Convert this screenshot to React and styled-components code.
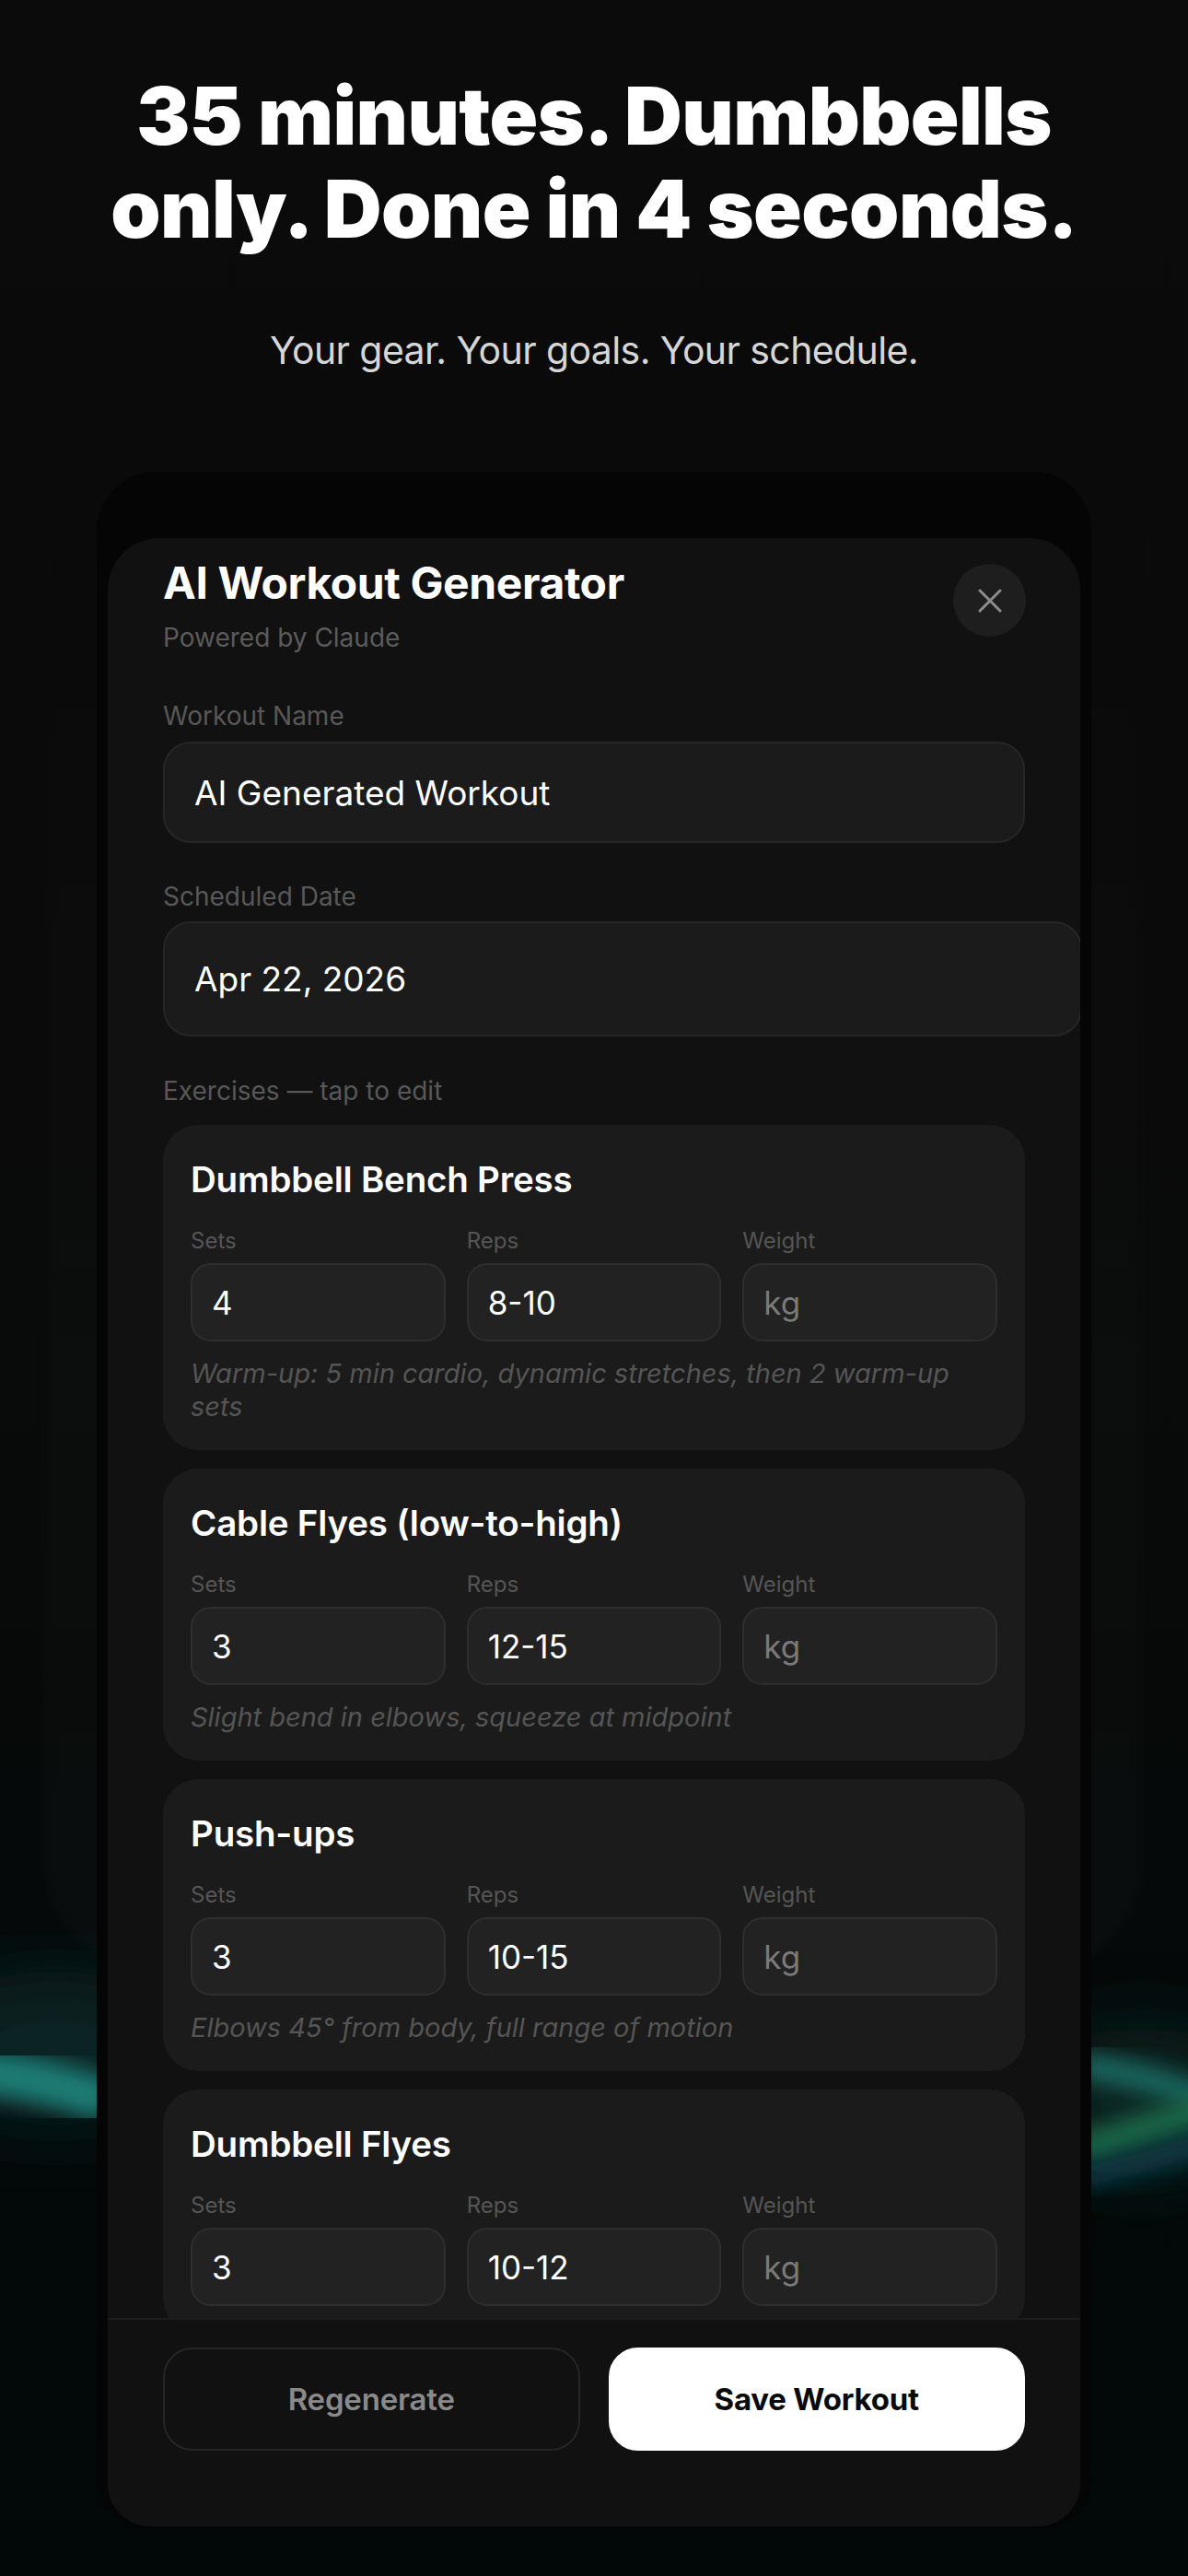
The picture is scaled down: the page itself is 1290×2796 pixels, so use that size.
import React from "react";
import styled, { createGlobalStyle } from "styled-components";

const GlobalStyle = createGlobalStyle`
  html, body {
    margin: 0;
    padding: 0;
    background: #0a0a0a;
  }
  body {
    font-family: Inter, "Noto Sans", "Liberation Sans", sans-serif;
    -webkit-font-smoothing: antialiased;
  }
  * {
    box-sizing: border-box;
  }
`;

const exercises = [
  {
    name: "Dumbbell Bench Press",
    sets: "4",
    reps: "8-10",
    note: "Warm-up: 5 min cardio, dynamic stretches, then 2 warm-up sets",
  },
  {
    name: "Cable Flyes (low-to-high)",
    sets: "3",
    reps: "12-15",
    note: "Slight bend in elbows, squeeze at midpoint",
  },
  {
    name: "Push-ups",
    sets: "3",
    reps: "10-15",
    note: "Elbows 45° from body, full range of motion",
  },
  {
    name: "Dumbbell Flyes",
    sets: "3",
    reps: "10-12",
  },
];

const Page = styled.div`
  position: relative;
  width: 1290px;
  height: 2796px;
  overflow: hidden;
  background: linear-gradient(
    180deg,
    #0b0b0b 0%,
    #0a0a0a 35%,
    #080909 60%,
    #050909 78%,
    #020707 100%
  );
`;

const Backdrop = styled.div`
  position: absolute;
  left: 48px;
  right: 48px;
  top: 470px;
  height: 1670px;
  border-radius: 120px;
  background: linear-gradient(
    180deg,
    rgba(255, 255, 255, 0) 0%,
    rgba(255, 255, 255, 0.012) 35%,
    rgba(255, 255, 255, 0.02) 100%
  );
  filter: blur(6px);
`;

const Glow = styled.svg`
  position: absolute;
  left: 0;
  top: 2100px;
  width: 1290px;
  height: 360px;
`;

const Hero = styled.header`
  position: relative;
  padding-top: 75px;
  text-align: center;
`;

const Headline = styled.h1`
  margin: 0 auto;
  width: 1240px;
  font-size: 87px;
  line-height: 101px;
  font-weight: 900;
  letter-spacing: -0.6px;
  color: #ffffff;
`;

const Tagline = styled.p`
  margin: 78px 0 0;
  font-size: 41px;
  line-height: 50px;
  font-weight: 400;
  letter-spacing: -0.6px;
  color: #d6d6d6;
`;

const Device = styled.div`
  position: relative;
  width: 1080px;
  margin: 107px auto 0;
  padding: 72px 12px 2px;
  background: #050505;
  border-radius: 64px 64px 56px 56px;
`;

const Sheet = styled.section`
  display: flex;
  flex-direction: column;
  height: 2158px;
  background: #111111;
  border-radius: 56px 56px 46px 46px;
  overflow: hidden;
`;

const SheetHeader = styled.div`
  display: flex;
  justify-content: space-between;
  align-items: flex-start;
  padding: 20px 59px 0 60px;
`;

const Title = styled.h2`
  margin: 0;
  font-size: 48px;
  line-height: 58px;
  font-weight: 700;
  letter-spacing: -0.4px;
  color: #ffffff;
`;

const Subtitle = styled.div`
  margin-top: 13px;
  font-size: 28px;
  line-height: 34px;
  color: #5b5b5b;
`;

const CloseButton = styled.button`
  display: flex;
  align-items: center;
  justify-content: center;
  width: 79px;
  height: 79px;
  margin-top: 8px;
  padding: 0;
  border: none;
  border-radius: 50%;
  background: #1e1e1e;
  cursor: pointer;
`;

const Body = styled.div`
  flex: 1;
  overflow: hidden;
  padding: 0 60px;
`;

const Label = styled.div`
  margin-top: ${(p) => p.$gap}px;
  font-size: 28px;
  line-height: 34px;
  color: #585858;
`;

const TextField = styled.div`
  display: flex;
  align-items: center;
  height: ${(p) => p.$height}px;
  width: ${(p) => (p.$overflow ? "calc(100% + 62px)" : "100%")};
  margin-top: ${(p) => p.$gap}px;
  padding: 0 32px;
  background: #1b1b1b;
  border: 2px solid #262626;
  border-radius: 30px;
  font-size: 37px;
  color: #ffffff;
`;

const CardList = styled.div`
  display: flex;
  flex-direction: column;
  gap: 20px;
  margin-top: 20px;
`;

const Card = styled.div`
  padding: 36px 30px 29px;
  background: #1b1b1b;
  border-radius: 38px;
`;

const CardTitle = styled.div`
  font-size: 38.5px;
  line-height: 46px;
  font-weight: 600;
  letter-spacing: -0.2px;
  color: #ffffff;
`;

const Fields = styled.div`
  display: grid;
  grid-template-columns: repeat(3, 1fr);
  column-gap: 23px;
  margin-top: 29px;
`;

const FieldLabel = styled.div`
  font-size: 24px;
  line-height: 29px;
  color: #555555;
`;

const FieldBox = styled.div`
  display: flex;
  align-items: center;
  height: 85px;
  margin-top: 10px;
  padding: 0 21px;
  background: #222222;
  border: 2px solid #2e2e2e;
  border-radius: 22px;
  font-size: 35px;
  color: ${(p) => (p.$placeholder ? "#7a7a7a" : "#ffffff")};
`;

const Note = styled.div`
  margin-top: 17px;
  font-size: 29px;
  line-height: 36px;
  font-style: italic;
  color: #555555;
`;

const Footer = styled.div`
  flex-shrink: 0;
  display: grid;
  grid-template-columns: 1fr 1fr;
  column-gap: 31px;
  height: 226px;
  padding: 30px 60px 0;
  border-top: 2px solid #1c1c1c;
  background: #111111;
`;

const Button = styled.button`
  height: 112px;
  border-radius: 32px;
  font-family: inherit;
  font-size: 33px;
  font-weight: ${(p) => (p.$primary ? 700 : 600)};
  letter-spacing: -0.2px;
  cursor: pointer;
  background: ${(p) => (p.$primary ? "#ffffff" : "#111111")};
  color: ${(p) => (p.$primary ? "#0a0a0a" : "#8a8a8a")};
  border: 2px solid ${(p) => (p.$primary ? "#ffffff" : "#262626")};
`;

const CloseIcon = () => (
  <svg width="26" height="26" viewBox="0 0 26 26" fill="none">
    <path
      d="M2 2 L24 24 M24 2 L2 24"
      stroke="#8c8c8c"
      strokeWidth="3"
      strokeLinecap="round"
    />
  </svg>
);

const AuroraGlow = () => (
  <Glow viewBox="0 2100 1290 360">
    <defs>
      <filter id="soft" x="-50%" y="-50%" width="200%" height="200%">
        <feGaussianBlur stdDeviation="12" />
      </filter>
      <filter id="haze" x="-50%" y="-50%" width="200%" height="200%">
        <feGaussianBlur stdDeviation="40" />
      </filter>
    </defs>
    <ellipse cx="60" cy="2220" rx="150" ry="80" fill="#0a2a2a" filter="url(#haze)" opacity="0.8" />
    <ellipse cx="1240" cy="2280" rx="120" ry="80" fill="#0a2a26" filter="url(#haze)" opacity="0.8" />
    <path d="M -40 2248 Q 40 2252 120 2282" stroke="#1e7d76" strokeWidth="48" fill="none" filter="url(#soft)" />
    <path d="M 1170 2242 Q 1240 2250 1320 2282" stroke="#1b7067" strokeWidth="26" fill="none" filter="url(#soft)" />
    <path d="M 1170 2334 Q 1240 2312 1320 2286" stroke="#1b6c4c" strokeWidth="32" fill="none" filter="url(#soft)" />
    <path d="M 1170 2364 Q 1240 2350 1320 2322" stroke="#0e3c4e" strokeWidth="22" fill="none" filter="url(#soft)" />
  </Glow>
);

const ExerciseCard = ({ exercise }) => (
  <Card>
    <CardTitle>{exercise.name}</CardTitle>
    <Fields>
      <div>
        <FieldLabel>Sets</FieldLabel>
        <FieldBox>{exercise.sets}</FieldBox>
      </div>
      <div>
        <FieldLabel>Reps</FieldLabel>
        <FieldBox>{exercise.reps}</FieldBox>
      </div>
      <div>
        <FieldLabel>Weight</FieldLabel>
        <FieldBox $placeholder>kg</FieldBox>
      </div>
    </Fields>
    {exercise.note && <Note>{exercise.note}</Note>}
  </Card>
);

export default function App() {
  return (
    <>
      <GlobalStyle />
      <Page>
        <Backdrop />
        <AuroraGlow />
        <Hero>
          <Headline>
            35 minutes. Dumbbells
            <br />
            only. Done in 4 seconds.
          </Headline>
          <Tagline>Your gear. Your goals. Your schedule.</Tagline>
        </Hero>

        <Device>
          <Sheet>
            <SheetHeader>
              <div>
                <Title>AI Workout Generator</Title>
                <Subtitle>Powered by Claude</Subtitle>
              </div>
              <CloseButton aria-label="Close">
                <CloseIcon />
              </CloseButton>
            </SheetHeader>

            <Body>
              <Label $gap={51}>Workout Name</Label>
              <TextField $height={110} $gap={11}>
                AI Generated Workout
              </TextField>

              <Label $gap={41}>Scheduled Date</Label>
              <TextField $height={125} $gap={10} $overflow>
                Apr 22, 2026
              </TextField>

              <Label $gap={42}>Exercises — tap to edit</Label>
              <CardList>
                {exercises.map((ex) => (
                  <ExerciseCard key={ex.name} exercise={ex} />
                ))}
              </CardList>
            </Body>

            <Footer>
              <Button>Regenerate</Button>
              <Button $primary>Save Workout</Button>
            </Footer>
          </Sheet>
        </Device>
      </Page>
    </>
  );
}
